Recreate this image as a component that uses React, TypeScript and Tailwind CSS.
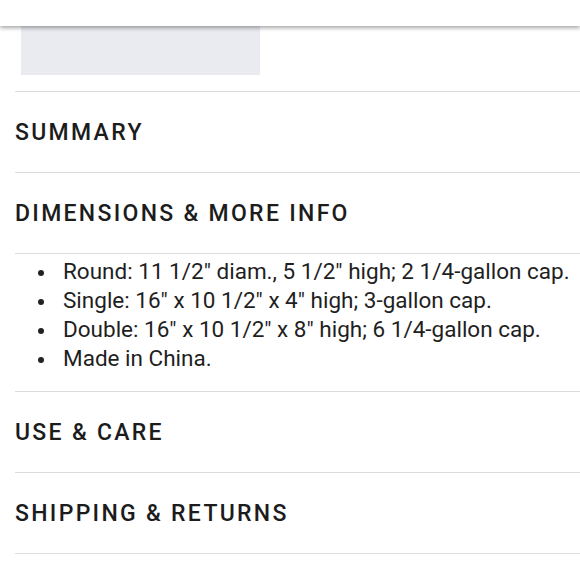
const sections = ["SUMMARY", "DIMENSIONS & MORE INFO"];
const after = ["USE & CARE", "SHIPPING & RETURNS"];

const details = [
  'Round: 11 1/2" diam., 5 1/2" high; 2 1/4-gallon cap.',
  'Single: 16" x 10 1/2" x 4" high; 3-gallon cap.',
  'Double: 16" x 10 1/2" x 8" high; 6 1/4-gallon cap.',
  "Made in China.",
];

function Heading({ title }: { title: string }) {
  return (
    <div className="h-[81px] flex items-center border-b border-[#dcdcdc]">
      <h3 className="text-[23px] font-medium tracking-[2.3px] text-[#1c1c1c] leading-none">{title}</h3>
    </div>
  );
}

export default function App() {
  return (
    <div className="w-[580px] h-[580px] bg-white overflow-hidden font-['Roboto',sans-serif]">
      {/* top bar */}
      <div className="relative z-10 h-[26px] bg-white shadow-[0_2px_4px_rgba(0,0,0,0.35)]" />
      <div className="pl-[15px]">
        <div className="h-[66px] border-b border-[#dcdcdc]">
          <div className="ml-[6px] w-[239px] h-[49px] bg-[#e9ebf0]" />
        </div>
        {sections.map((s) => (
          <Heading key={s} title={s} />
        ))}
        <div className="h-[138px] border-b border-[#dcdcdc] pt-[3px]">
          <ul className="pl-[23px] text-[22.5px] leading-[29px] text-[#1f1f1f]">
            {details.map((d) => (
              <li key={d} className="flex items-center whitespace-nowrap">
                <span className="w-[6px] h-[6px] rounded-full bg-[#222] mr-[19px] mt-[2px] shrink-0" />
                {d}
              </li>
            ))}
          </ul>
        </div>
        {after.map((s) => (
          <Heading key={s} title={s} />
        ))}
      </div>
    </div>
  );
}
